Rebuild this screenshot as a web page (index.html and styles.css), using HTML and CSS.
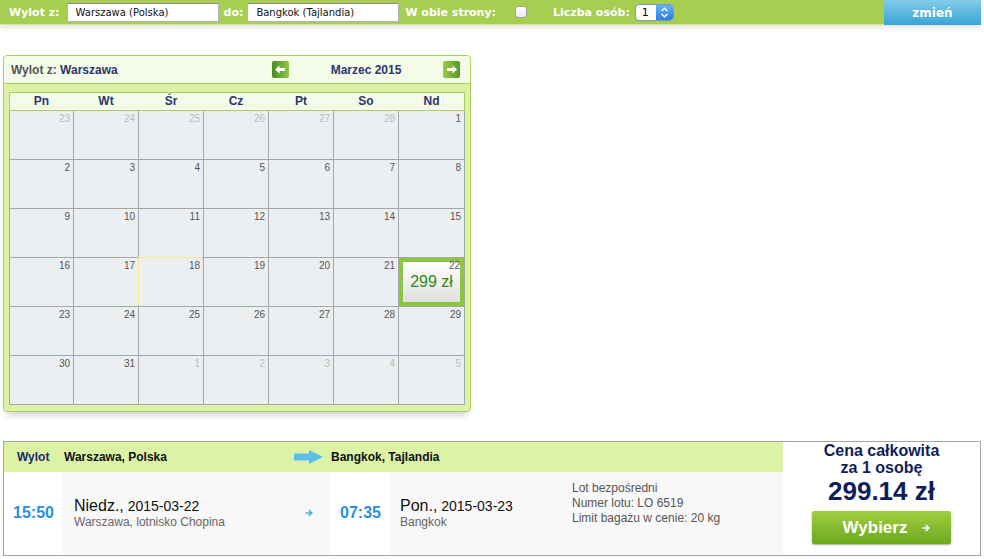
FILE: index.html
```html
<!DOCTYPE html>
<html>
    <head>
        <title>Wyszukiwarka lotów</title>
        <meta charset="UTF-8">
        <link rel="stylesheet" href="styles.css">
    </head>
    <body>
        <div id="searchBar">
            <label class="lbl lbl-from">Wylot z:</label>
            <input class="field" type="text" value="Warszawa (Polska)">
            <label class="lbl lbl-to">do:</label>
            <input class="field" type="text" value="Bangkok (Tajlandia)">
            <label class="lbl lbl-both">W obie strony:</label>
            <input class="check" type="checkbox">
            <label class="lbl lbl-pax">Liczba osób:</label>
            <div class="pax">
                <span class="pax-val">1</span>
                <span class="pax-arrows">
                    <svg width="17" height="17" viewBox="0 0 17 17"><path d="M5.5 7 L8.5 4.2 L11.5 7 M5.5 10 L8.5 12.8 L11.5 10" fill="none" stroke="#fff" stroke-width="1.4"/></svg>
                </span>
            </div>
            <button class="btn-change">zmień</button>
        </div>

        <div id="calendar">
            <div class="cal-head">
                <div class="cal-title">Wylot z: <b>Warszawa</b></div>
                <div class="cal-nav">
                    <span class="nav-btn prev">
                        <svg width="17" height="17" viewBox="0 0 17 17"><polygon points="3,8.5 7.5,4.5 7.5,7 13,7 13,10 7.5,10 7.5,12.5" fill="#fff"/></svg>
                    </span>
                    <span class="cal-month">Marzec 2015</span>
                    <span class="nav-btn next">
                        <svg width="17" height="17" viewBox="0 0 17 17"><polygon points="14,8.5 9.5,4.5 9.5,7 4,7 4,10 9.5,10 9.5,12.5" fill="#fff"/></svg>
                    </span>
                </div>
            </div>
            <div class="cal-body">
                <div class="cal-days">
                    <div>Pn</div><div>Wt</div><div>Śr</div><div>Cz</div><div>Pt</div><div>So</div><div>Nd</div>
                </div>
                <div class="cal-grid">
                    <div class="day other"><span class="num">23</span></div>
                    <div class="day other"><span class="num">24</span></div>
                    <div class="day other"><span class="num">25</span></div>
                    <div class="day other"><span class="num">26</span></div>
                    <div class="day other"><span class="num">27</span></div>
                    <div class="day other"><span class="num">28</span></div>
                    <div class="day"><span class="num">1</span></div>

                    <div class="day"><span class="num">2</span></div>
                    <div class="day"><span class="num">3</span></div>
                    <div class="day"><span class="num">4</span></div>
                    <div class="day"><span class="num">5</span></div>
                    <div class="day"><span class="num">6</span></div>
                    <div class="day"><span class="num">7</span></div>
                    <div class="day"><span class="num">8</span></div>

                    <div class="day"><span class="num">9</span></div>
                    <div class="day"><span class="num">10</span></div>
                    <div class="day"><span class="num">11</span></div>
                    <div class="day"><span class="num">12</span></div>
                    <div class="day"><span class="num">13</span></div>
                    <div class="day"><span class="num">14</span></div>
                    <div class="day"><span class="num">15</span></div>

                    <div class="day"><span class="num">16</span></div>
                    <div class="day"><span class="num">17</span></div>
                    <div class="day today"><span class="num">18</span></div>
                    <div class="day"><span class="num">19</span></div>
                    <div class="day"><span class="num">20</span></div>
                    <div class="day"><span class="num">21</span></div>
                    <div class="day price"><span class="num">22</span><span class="fare">299 zł</span></div>

                    <div class="day"><span class="num">23</span></div>
                    <div class="day"><span class="num">24</span></div>
                    <div class="day"><span class="num">25</span></div>
                    <div class="day"><span class="num">26</span></div>
                    <div class="day"><span class="num">27</span></div>
                    <div class="day"><span class="num">28</span></div>
                    <div class="day"><span class="num">29</span></div>

                    <div class="day"><span class="num">30</span></div>
                    <div class="day"><span class="num">31</span></div>
                    <div class="day other"><span class="num">1</span></div>
                    <div class="day other"><span class="num">2</span></div>
                    <div class="day other"><span class="num">3</span></div>
                    <div class="day other"><span class="num">4</span></div>
                    <div class="day other"><span class="num">5</span></div>
                </div>
            </div>
        </div>

        <div id="flight">
            <div class="flight-main">
                <div class="fh fh-label">Wylot</div>
                <div class="fh fh-from">
                    Warszawa, Polska
                    <svg class="big-arrow" width="29" height="14" viewBox="0 0 29 14"><rect x="0" y="3.5" width="16" height="7" fill="#5bbfea"/><polygon points="15,0 29,7 15,14" fill="#5bbfea"/></svg>
                </div>
                <div class="fh fh-to">Bangkok, Tajlandia</div>

                <div class="time">15:50</div>
                <div class="place">
                    <div class="place-txt">
                        <div class="date"><span class="wd">Niedz.,</span> 2015-03-22</div>
                        <div class="airport">Warszawa, lotnisko Chopina</div>
                    </div>
                    <svg class="small-arrow" width="8" height="8" viewBox="0 0 8 8"><path d="M0.5 4 H6.5 M3.8 1 L6.8 4 L3.8 7" fill="none" stroke="#4bb3ea" stroke-width="1.6"/></svg>
                </div>
                <div class="time time-arr">07:35</div>
                <div class="place place-dest">
                    <div class="place-txt">
                        <div class="date"><span class="wd">Pon.,</span> 2015-03-23</div>
                        <div class="airport">Bangkok</div>
                    </div>
                    <div class="info">
                        Lot bezpośredni<br>
                        Numer lotu: LO 6519<br>
                        Limit bagażu w cenie: 20 kg
                    </div>
                </div>
            </div>
            <div class="flight-price">
                <div class="price-label">Cena całkowita<br>za 1 osobę</div>
                <div class="price-total">299.14 zł</div>
                <button class="btn-choose">Wybierz
                    <svg width="8" height="8" viewBox="0 0 8 8"><path d="M0.5 4 H6.5 M3.8 1 L6.8 4 L3.8 7" fill="none" stroke="#fff" stroke-width="1.6"/></svg>
                </button>
            </div>
        </div>
    </body>
</html>
```

FILE: styles.css
```css
body {
    margin: 0;
    background: #fff;
    font-family: "Liberation Sans", Arial, sans-serif;
}

/* search bar */

#searchBar {
    display: flex;
    align-items: center;
    width: 981px;
    height: 24px;
    background: #a6ce50;
    border-bottom: 1px solid #cfe59c;
    box-shadow: 0 3px 5px rgba(0, 0, 0, 0.1);
    font-family: "DejaVu Sans", Verdana, sans-serif;
}

.lbl {
    color: #fff;
    font-size: 11px;
    font-weight: bold;
}

.lbl-from { margin: 0 7px 0 9px; }
.lbl-to   { margin: 0 4px 0 5px; }
.lbl-both { margin: 0 0 0 6px; }
.lbl-pax  { margin: 0 5px 0 0; }

.field {
    width: 152px;
    height: 19px;
    box-sizing: border-box;
    margin: 0;
    padding: 0 8px;
    border: 1px solid #b4b4b4;
    border-top-color: #8c8c8c;
    font-family: "DejaVu Sans", Verdana, sans-serif;
    font-size: 10px;
    color: #111;
}

.check {
    -webkit-appearance: none;
    appearance: none;
    width: 12px;
    height: 12px;
    margin: 0 26px 0 19px;
    border: 1px solid #a0a0a0;
    border-radius: 3px;
    background: linear-gradient(#fff, #ececec);
}

.pax {
    display: flex;
    width: 39px;
    height: 17px;
    box-sizing: border-box;
    border: 1px solid #7b98b8;
    border-radius: 4px;
    overflow: hidden;
    background: #fff;
}

.pax-val {
    flex: 1;
    padding-left: 6px;
    font-size: 11px;
    line-height: 15px;
    color: #000;
}

.pax-arrows {
    display: flex;
    width: 17px;
    align-items: center;
    justify-content: center;
    background: linear-gradient(#69b0f4, #2a7ee2);
}

.btn-change {
    margin-left: auto;
    width: 97px;
    height: 25px;
    align-self: flex-start;
    border: none;
    background: linear-gradient(#82cbe9, #39a4d6);
    color: #fff;
    font-family: "DejaVu Sans", Verdana, sans-serif;
    font-size: 12px;
    font-weight: bold;
}

/* calendar */

#calendar {
    width: 468px;
    box-sizing: border-box;
    margin: 30px 0 0 3px;
    background: #dcf2a6;
    border: 1px solid #a8d15a;
    border-radius: 4px;
    box-shadow: 0 7px 7px -4px rgba(0, 0, 0, 0.2);
}

.cal-head {
    display: flex;
    align-items: center;
    height: 27px;
    padding: 0 10px 0 7px;
    background: #f4fbe8;
    border-bottom: 1px solid #a8d15a;
    border-radius: 3px 3px 0 0;
    font-size: 12px;
    font-weight: bold;
}

.cal-title {
    flex: 1;
    color: #555;
}

.cal-title b {
    color: #2b3670;
}

.cal-nav {
    display: flex;
    align-items: center;
    width: 188px;
}

.cal-month {
    flex: 1;
    text-align: center;
    color: #2b3670;
}

.nav-btn {
    display: flex;
    width: 17px;
    height: 17px;
    border-radius: 2px;
}

.nav-btn.prev { background: linear-gradient(to right, #4b8b22, #8fc843); }
.nav-btn.next { background: linear-gradient(to right, #9ccd48, #589828); }

.cal-body {
    padding: 8px 5px 6px 5px;
}

.cal-days,
.cal-grid {
    display: grid;
    grid-template-columns: 63px repeat(5, 64px) 65px;
    column-gap: 1px;
}

.cal-days {
    border: 1px solid #a8d15a;
    background: #f4fbe8;
    font-size: 12px;
    font-weight: bold;
    line-height: 17px;
    text-align: center;
    color: #2b3670;
}

.cal-grid {
    grid-auto-rows: 48px;
    row-gap: 1px;
    background: #a7a7a7;
    border: 1px solid #a7a7a7;
    border-top: none;
}

.day {
    padding: 2px 3px 0 0;
    background: #eceff2;
    text-align: right;
    font-size: 10px;
    line-height: 12px;
    color: #555;
}

.day.other { color: #bcbcbc; }

.day.today {
    box-shadow: -1px -1px 0 #fde98a;
}

.day.price {
    display: flex;
    flex-direction: column;
    box-sizing: border-box;
    padding: 0;
    border: 4px solid #8cc63f;
    background: linear-gradient(#fff, #dfdfdf);
}

.day.price .num {
    margin: -2px 0 0 0;
}

.fare {
    text-align: center;
    font-size: 16px;
    line-height: 20px;
    color: #2f8a12;
}

/* flight row */

#flight {
    display: flex;
    width: 978px;
    box-sizing: border-box;
    margin: 29px 0 0 3px;
    border: 1px solid #a5a5a5;
}

.flight-main {
    flex: 1;
    display: grid;
    grid-template-columns: 59px 267px 60px 1fr;
    grid-template-rows: 30px 83px;
}

.fh {
    display: flex;
    align-items: center;
    background: #dcf2a6;
    font-size: 12px;
    font-weight: bold;
    color: #111;
}

.fh-label {
    padding-left: 13px;
    color: #1b2a6b;
}

.fh-from {
    padding: 0 7px 0 1px;
    justify-content: space-between;
}

.fh-to {
    grid-column: 3 / 5;
    padding-left: 1px;
}

.time {
    display: flex;
    align-items: center;
    padding: 0 0 1px 9px;
    background: #fff;
    font-size: 16px;
    font-weight: bold;
    color: #2a8fe0;
}

.time-arr { padding-left: 10px; }

.place {
    display: flex;
    align-items: center;
    padding: 0 17px 2px 11px;
    background: #f8f8f8;
}

.place-dest {
    padding-left: 10px;
}

.place-txt {
    flex: 1;
}

.place-dest .place-txt {
    flex: none;
    width: 172px;
}

.date {
    font-size: 14px;
    line-height: 18px;
    color: #111;
}

.date .wd {
    font-size: 16px;
}

.airport {
    font-size: 12px;
    line-height: 14px;
    color: #666;
}

.info {
    align-self: flex-start;
    margin-top: 9px;
    font-size: 12px;
    line-height: 15px;
    color: #555;
}

.flight-price {
    width: 197px;
    text-align: center;
    color: #0f1f5c;
    font-weight: bold;
}

.price-label {
    font-size: 16px;
    line-height: 17px;
}

.price-total {
    font-size: 26px;
    line-height: 30px;
}

.btn-choose {
    display: flex;
    align-items: center;
    justify-content: center;
    gap: 15px;
    width: 139px;
    height: 33px;
    margin: 5px auto 0;
    padding: 0 0 0 10px;
    border: none;
    border-radius: 2px;
    background: linear-gradient(#9fce40, #6da81f);
    box-shadow: 0 1px 2px rgba(0, 0, 0, 0.35);
    color: #fff;
    font-family: "Liberation Sans", Arial, sans-serif;
    font-size: 17px;
    font-weight: bold;
}
```
